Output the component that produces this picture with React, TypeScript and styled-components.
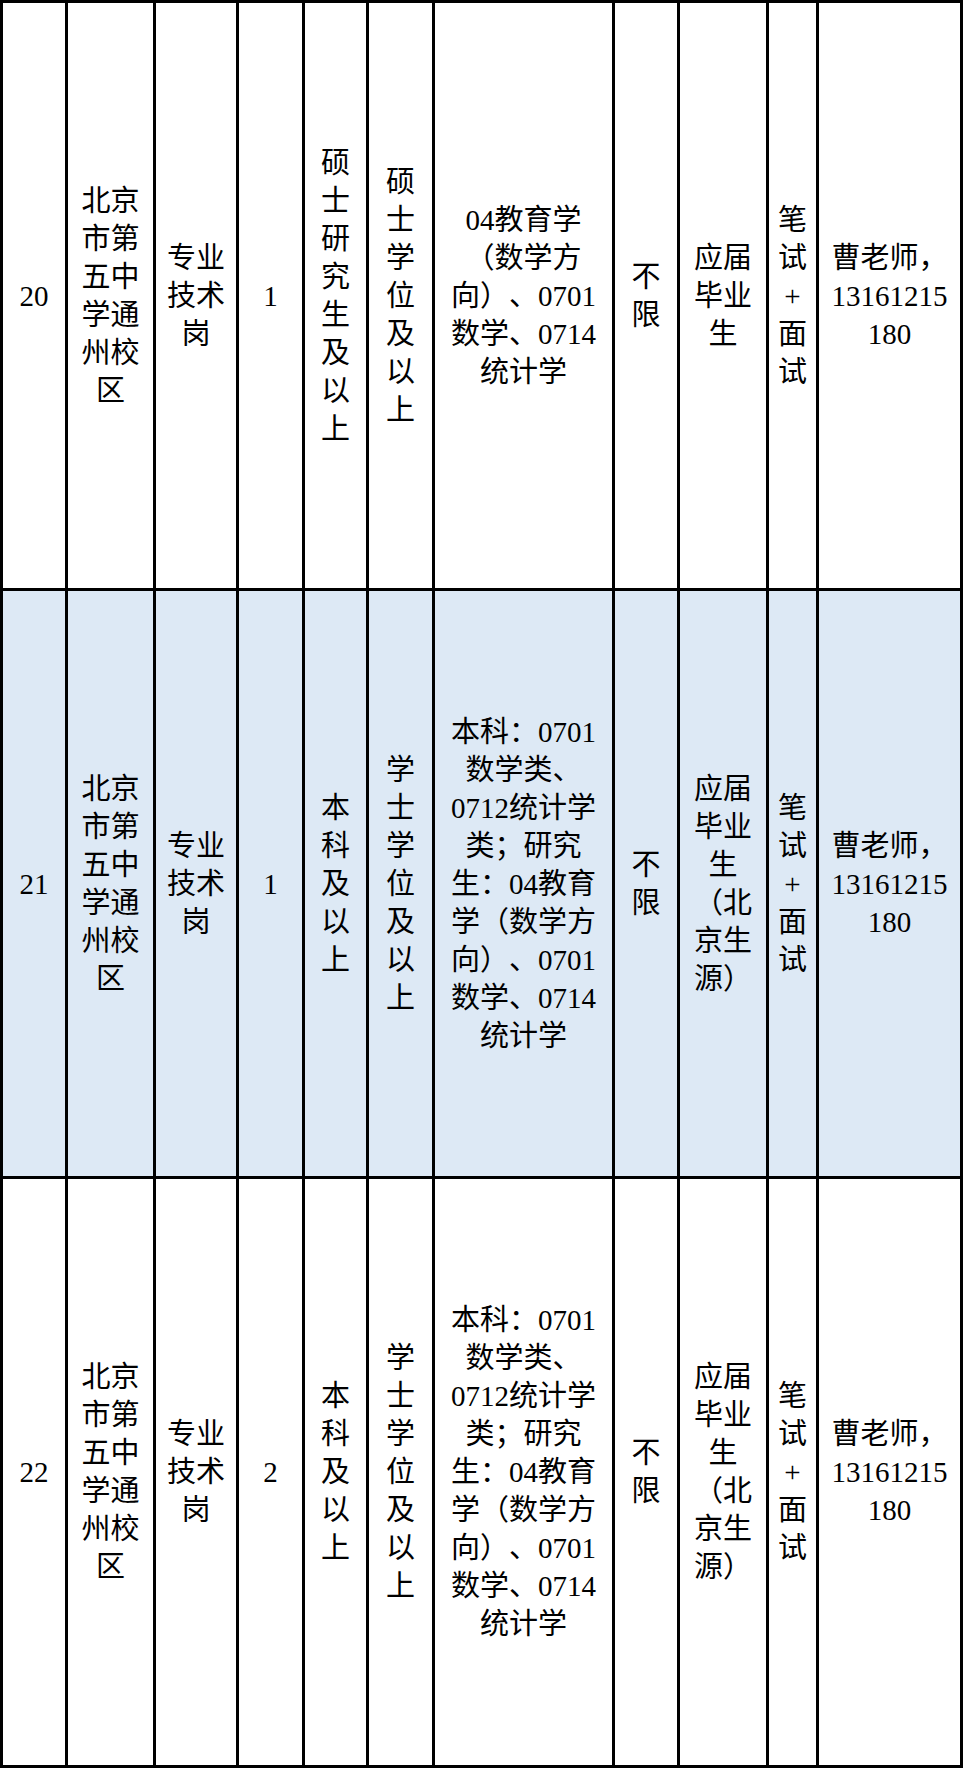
import styled, { createGlobalStyle } from "styled-components";

const GlobalStyle = createGlobalStyle`
  html, body {
    margin: 0;
    padding: 0;
    background: #fff;
  }
`;

// widths of the cell interiors, the 3px rules come from the grid gap
const COLS = [62, 85, 80, 63, 61, 63, 177, 62, 86, 47, 141];

const Sheet = styled.div`
  display: grid;
  grid-template-columns: ${COLS.map((w) => `${w}px`).join(" ")};
  grid-template-rows: 585px 585px 586px;
  gap: 3px;
  padding: 3px;
  width: 963px;
  box-sizing: border-box;
  background: #000;
`;

const Cell = styled.div<{ $shade?: boolean; $pad?: number }>`
  display: flex;
  align-items: center;
  justify-content: center;
  box-sizing: border-box;
  padding: 0 ${(p) => p.$pad ?? 10}px;
  background: ${(p) => (p.$shade ? "#dde9f5" : "#fff")};
  color: #000;
  font-family: "Liberation Serif", "Noto Sans CJK SC", serif;
  font-size: 29px;
  line-height: 38px;
  text-align: center;
  overflow-wrap: anywhere;
  text-spacing-trim: space-all;
`;

const Text = styled.span`
  display: block;
  width: 100%;
`;

type Row = { shade?: boolean; cells: string[] };

const rows: Row[] = [
  {
    cells: [
      "20",
      "北京市第五中学通州校区",
      "专业技术岗",
      "1",
      "硕士研究生及以上",
      "硕士学位及以上",
      "04教育学（数学方向）、0701数学、0714统计学",
      "不限",
      "应届毕业生",
      "笔试+面试",
      "曹老师，13161215180",
    ],
  },
  {
    shade: true,
    cells: [
      "21",
      "北京市第五中学通州校区",
      "专业技术岗",
      "1",
      "本科及以上",
      "学士学位及以上",
      "本科：0701数学类、0712统计学类；研究生：04教育学（数学方向）、0701数学、0714统计学",
      "不限",
      "应届毕业生（北京生源）",
      "笔试+面试",
      "曹老师，13161215180",
    ],
  },
  {
    cells: [
      "22",
      "北京市第五中学通州校区",
      "专业技术岗",
      "2",
      "本科及以上",
      "学士学位及以上",
      "本科：0701数学类、0712统计学类；研究生：04教育学（数学方向）、0701数学、0714统计学",
      "不限",
      "应届毕业生（北京生源）",
      "笔试+面试",
      "曹老师，13161215180",
    ],
  },
];

const App = () => {
  return (
    <>
      <GlobalStyle />
      <Sheet>
        {rows.map((row, r) =>
          row.cells.map((text, c) => (
            <Cell key={`${r}-${c}`} $shade={row.shade} $pad={c === 9 ? 5 : 10}>
              <Text>{text}</Text>
            </Cell>
          ))
        )}
      </Sheet>
    </>
  );
};

export default App;
